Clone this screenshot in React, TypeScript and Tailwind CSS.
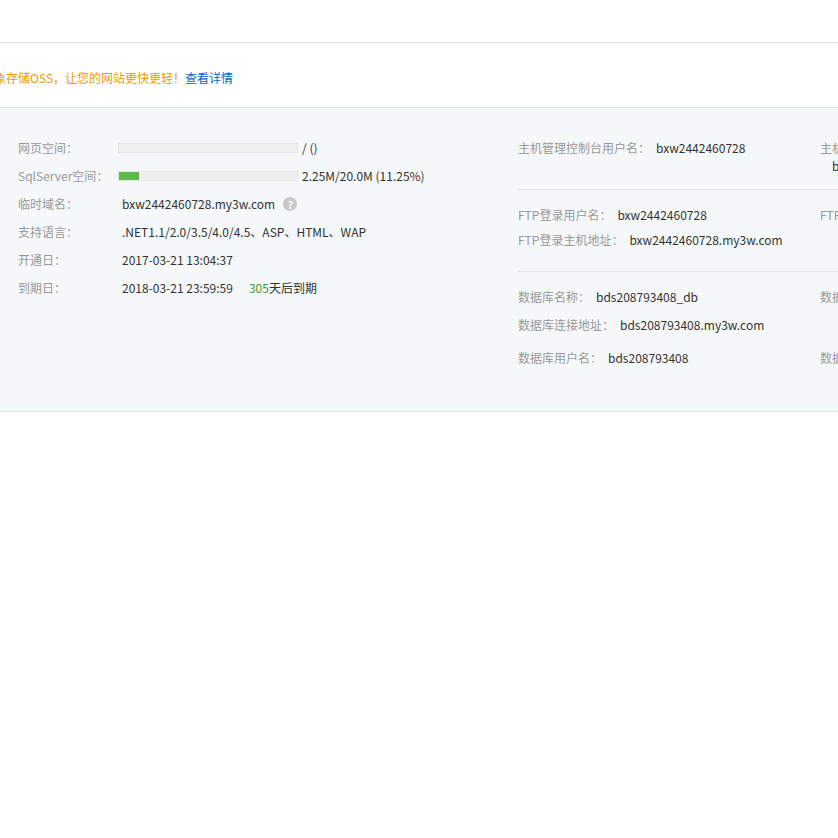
export default function App() {
  const font = { fontFamily: '"Microsoft YaHei", "Noto Sans CJK SC", sans-serif' };
  return (
    <div className="w-[838px] h-[838px] overflow-hidden bg-white text-[12px] text-[#333]" style={font}>
      <div className="h-[43px] border-b border-[#e1e1e1]" />
      <div className="h-[64px] flex items-center whitespace-nowrap pt-[6px]">
        <span className="ml-[-42px] shrink-0 text-[#f39800]">使用对象存储OSS，让您的网站更快更轻！</span>
        <span className="shrink-0 text-[#06c]">查看详情</span>
      </div>
      <div className="h-[305px] bg-[#f5f8f8] border-y border-[#e1e1e1] flex whitespace-nowrap">
        <div className="w-[500px] shrink-0 pl-[18px] pt-[26px] flex flex-col">
          <div className="h-[28px] flex items-center">
            <span className="w-[100px] text-[#999]">网页空间：</span>
            <div className="w-[180px] h-[10px] bg-[#eef0ef] border border-[#e2e5e3]" />
            <span className="ml-[4px]">/ ()</span>
          </div>
          <div className="h-[28px] flex items-center">
            <span className="w-[100px] text-[#999]">SqlServer空间：</span>
            <div className="w-[180px] h-[10px] bg-[#eef0ef] border border-[#e2e5e3]">
              <div className="h-full w-[20px] bg-[#5cb94a]" />
            </div>
            <span className="ml-[4px]">2.25M/20.0M (11.25%)</span>
          </div>
          <div className="h-[28px] flex items-center">
            <span className="w-[104px] text-[#999]">临时域名：</span>
            <span>bxw2442460728.my3w.com</span>
            <span className="ml-[8px] w-[14px] h-[14px] rounded-full bg-[#c8c8c8] text-white text-[10px] font-bold flex items-center justify-center">?</span>
          </div>
          <div className="h-[28px] flex items-center">
            <span className="w-[104px] text-[#999]">支持语言：</span>
            <span>.NET1.1/2.0/3.5/4.0/4.5、ASP、HTML、WAP</span>
          </div>
          <div className="h-[28px] flex items-center">
            <span className="w-[104px] text-[#999]">开通日：</span>
            <span>2017-03-21 13:04:37</span>
          </div>
          <div className="h-[28px] flex items-center">
            <span className="w-[104px] text-[#999]">到期日：</span>
            <span>2018-03-21 23:59:59</span>
            <span className="ml-[16px]"><span className="text-[#3c9a2a]">305</span>天后到期</span>
          </div>
        </div>
        <div className="w-[302px] shrink-0 ml-[18px] pt-[31px] flex flex-col">
          <div className="h-[51px] border-b border-[#e1e5e5]">
            <span className="text-[#999]">主机管理控制台用户名：</span><span className="ml-[6px]">bxw2442460728</span>
          </div>
          <div className="pt-[16px] h-[33px]"><span className="text-[#999]">FTP登录用户名：</span><span className="ml-[6px]">bxw2442460728</span></div>
          <div className="h-[49px] pt-[8px] border-b border-[#e1e5e5]"><span className="text-[#999]">FTP登录主机地址：</span><span className="ml-[6px]">bxw2442460728.my3w.com</span></div>
          <div className="pt-[16px] h-[44px]"><span className="text-[#999]">数据库名称：</span><span className="ml-[6px]">bds208793408_db</span></div>
          <div className="h-[33px]"><span className="text-[#999]">数据库连接地址：</span><span className="ml-[6px]">bds208793408.my3w.com</span></div>
          <div><span className="text-[#999]">数据库用户名：</span><span className="ml-[6px]">bds208793408</span></div>
        </div>
        <div className="w-[200px] shrink-0 pt-[31px] flex flex-col text-[#999]">
          <div className="h-[51px] border-b border-[#e1e5e5]">主机管理<br /><span className="text-[#333] ml-[12px]">bxw</span></div>
          <div className="pt-[16px] h-[82px] border-b border-[#e1e5e5]">FTP登录密码</div>
          <div className="pt-[16px] h-[77px]">数据库密码</div>
          <div>数据库类型</div>
        </div>
      </div>
    </div>
  );
}
